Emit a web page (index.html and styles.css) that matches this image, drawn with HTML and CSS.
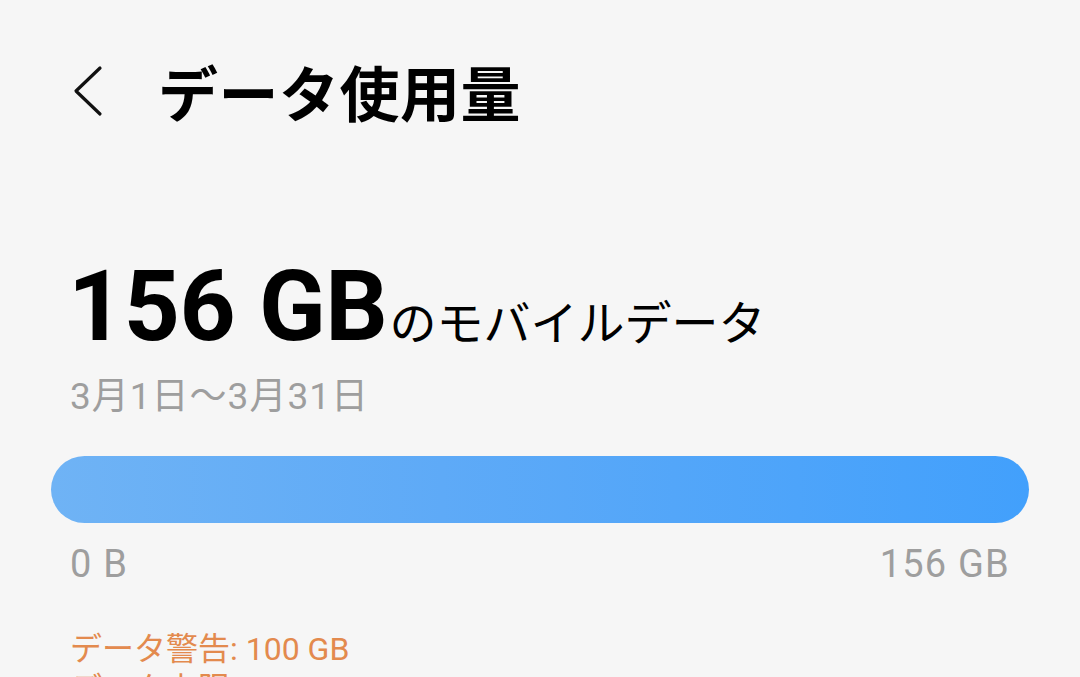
FILE: index.html
```html
<!DOCTYPE html>
<html>

<head>
    <title>データ使用量</title>
    <link rel="stylesheet" href="styles.css">
</head>

<body>

    <!-- Top bar -->
    <header class="top-bar">
        <button class="back" aria-label="戻る">
            <svg width="34" height="54" viewBox="0 0 34 54">
                <polyline points="29,4 5,27 29,50" fill="none" stroke="#111" stroke-width="3.2"
                    stroke-linecap="round" stroke-linejoin="round" />
            </svg>
        </button>
        <h1 class="title">データ使用量</h1>
    </header>

    <!-- Usage summary -->
    <section class="usage">
        <div class="total">
            <span class="amount">156 GB</span><span class="unit">のモバイルデータ</span>
        </div>
        <div class="period">3月1日～3月31日</div>

        <div class="bar"></div>
        <div class="scale">
            <span>0 B</span>
            <span>156 GB</span>
        </div>

        <div class="warning">データ警告: 100 GB</div>
        <div class="limit">データ上限: 150 GB</div>
    </section>

</body>

</html>
```

FILE: styles.css
```css
body {
    background-color: #f6f6f6;
    font-family: Roboto, "Noto Sans CJK JP", sans-serif;
    margin: 0;
    height: 677px;
    overflow: hidden;
    color: #000;
}

.top-bar {
    display: flex;
    align-items: center;
    height: 110px;
    padding: 36px 0 0 71px;
}

.back {
    background: none;
    border: none;
    padding: 0;
    width: 87px;
    display: flex;
    align-items: center;
    cursor: pointer;
}

.title {
    margin: 0;
    font-family: "Noto Sans CJK JP", sans-serif;
    font-size: 60px;
    font-weight: 700;
    line-height: 1;
    letter-spacing: 0.5px;
}

.usage {
    padding: 0 51px;
}

.total {
    margin-top: 112px;
    padding-left: 17px;
    line-height: 1;
    white-space: nowrap;
}

.amount {
    font-size: 98px;
    font-weight: 700;
    letter-spacing: -0.5px;
}

.unit {
    font-family: "Noto Sans CJK JP", sans-serif;
    font-size: 47px;
    margin-left: 2px;
}

.period {
    margin-top: 22px;
    padding-left: 19px;
    font-size: 37px;
    line-height: 1;
    letter-spacing: 1px;
    color: #9e9e9e;
}

.bar {
    margin-top: 41px;
    height: 67px;
    border-radius: 34px;
    background: linear-gradient(to right, #6fb3f5, #5eaaf7 40%, #42a0fc);
}

.scale {
    display: flex;
    justify-content: space-between;
    padding: 0 19px;
    margin-top: 22px;
    font-size: 38px;
    line-height: 1;
    letter-spacing: 1.2px;
    color: #9e9e9e;
}

.warning,
.limit {
    padding-left: 19px;
    font-size: 32px;
    line-height: 1;
    color: #e38a4e;
}

.warning {
    margin-top: 50px;
}

.limit {
    margin-top: 8px;
}
```
